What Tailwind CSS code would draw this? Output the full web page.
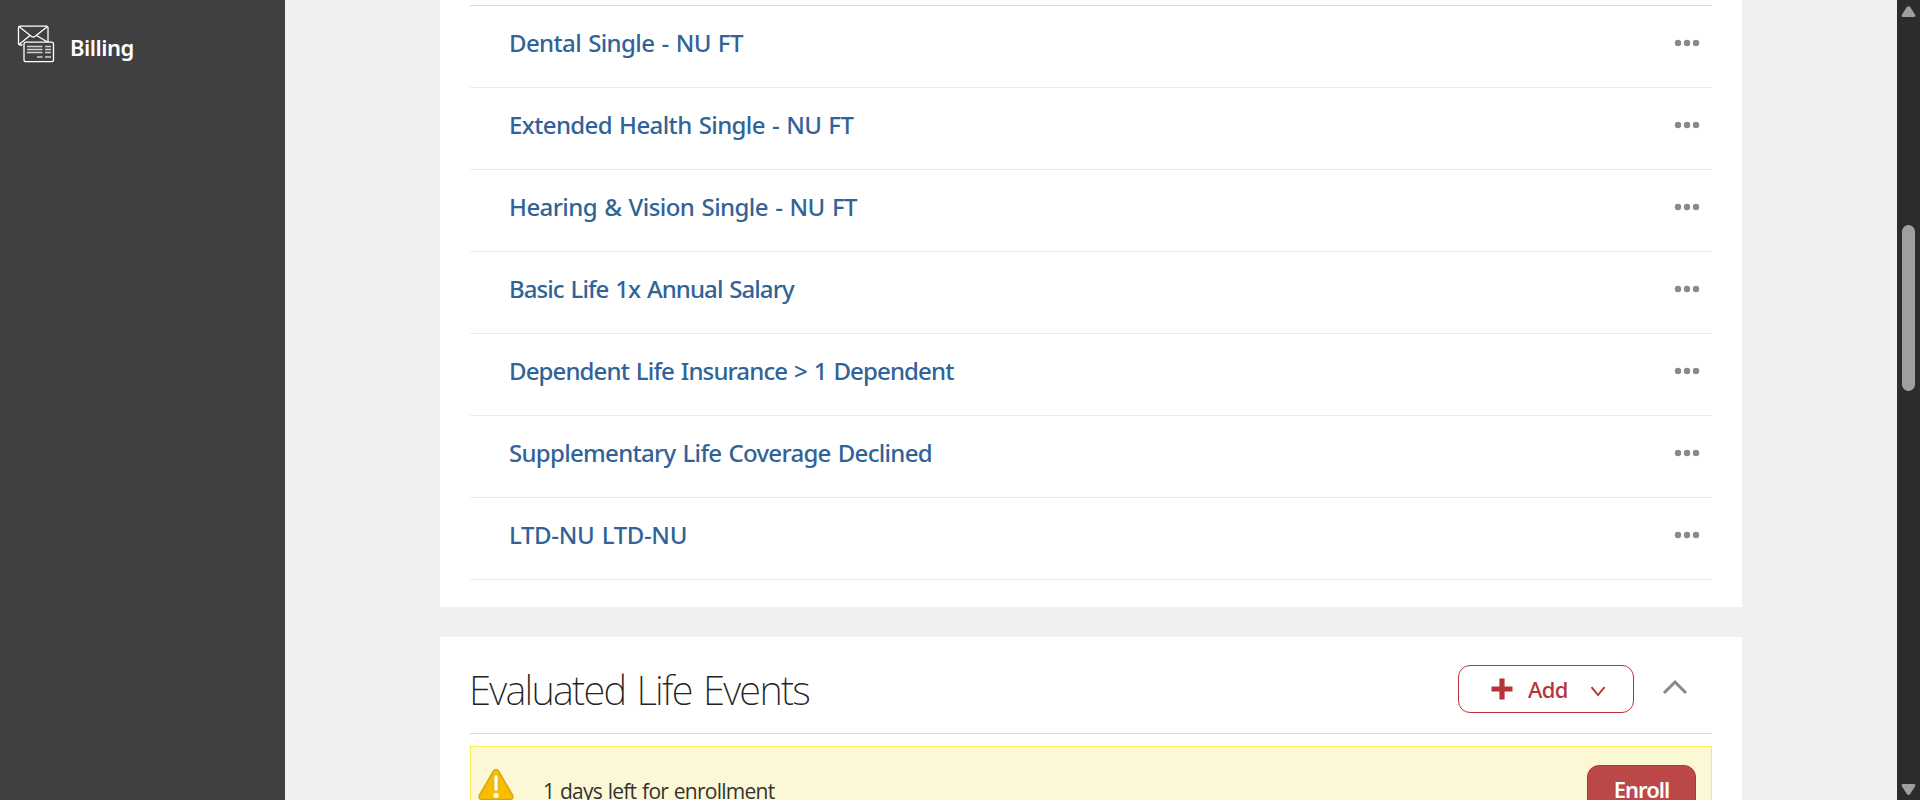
<!DOCTYPE html>
<html lang="en">
<head>
<meta charset="utf-8">
<title>Benefits</title>
<script src="https://cdn.jsdelivr.net/npm/@tailwindcss/browser@4"></script>
</head>
<body class="h-[800px] w-[1920px] overflow-hidden bg-[#f0f0f0] font-['Noto_Sans',sans-serif]">
<svg class="hidden">
  <symbol id="dots" viewBox="0 0 26 8"><g fill="#868b8e"><circle cx="4" cy="4" r="3.2"/><circle cx="13" cy="4" r="3.2"/><circle cx="22" cy="4" r="3.2"/></g></symbol>
</svg>
<div class="flex h-[800px]">
  <aside class="w-[285px] shrink-0 bg-[#404040]">
    <a class="flex h-[90px] border-b border-[#453c41] pl-[17px] text-white">
      <svg class="mt-[25px] h-[38px] w-[38px] shrink-0" viewBox="0 0 38 38" fill="none" stroke="#fff">
        <path d="M5.5 20H3a1.5 1.5 0 0 1-1.500-1.500v-16A1.500 1.500 0 0 1 3 1.200h26.500a1.500 1.500 0 0 1 1.500 1.500V17" stroke-width="1.3"/>
        <path d="M2 1.500 14.500 11.500q1.700 1 3.400 0L30.500 1.500M2 19.500 13 10.500M30.500 17 19.500 10.500" stroke-width="1.300"/>
        <rect x="7" y="17.200" width="29.500" height="19.500" rx="2" fill="#404040" stroke-width="1.300"/>
        <g stroke="#d0d0d0" stroke-width="1.600"><path d="M10 21.500h15.500M28 21.500h6M10 24.500h15.500M28 24.500h6M10 27.500h15.500M28 27.500h6M20 32h5.500M28 32h6"/></g>
      </svg>
      <span class="mt-[31px] ml-[15px] text-[22px] leading-8 font-semibold tracking-[-0.5px]">Billing</span>
    </a>
  </aside>

  <main class="flex w-[1612px] shrink-0 flex-col gap-[30px] pl-[155px]">
    <section class="h-[607px] w-[1302px] bg-white px-[30px] pt-[5px]">
      <ul class="border-t border-[#d3dde5] text-[24px] font-medium text-[#316399] [word-spacing:1.5px]">
        <li class="flex h-[82px] items-start justify-between border-b border-[#ececec] pr-3 pl-[39px]"><a class="mt-[19px] leading-9 tracking-[-0.62px]">Dental Single - NU FT</a><svg class="mt-[33px] h-2 w-[26px]"><use href="#dots"/></svg></li>
        <li class="flex h-[82px] items-start justify-between border-b border-[#ececec] pr-3 pl-[39px]"><a class="mt-[19px] leading-9 tracking-[-0.62px]">Extended Health Single - NU FT</a><svg class="mt-[33px] h-2 w-[26px]"><use href="#dots"/></svg></li>
        <li class="flex h-[82px] items-start justify-between border-b border-[#ececec] pr-3 pl-[39px]"><a class="mt-[19px] leading-9 tracking-[-0.56px]">Hearing &amp; Vision Single - NU FT</a><svg class="mt-[33px] h-2 w-[26px]"><use href="#dots"/></svg></li>
        <li class="flex h-[82px] items-start justify-between border-b border-[#ececec] pr-3 pl-[39px]"><a class="mt-[19px] leading-9 tracking-[-0.93px]">Basic Life 1x Annual Salary</a><svg class="mt-[33px] h-2 w-[26px]"><use href="#dots"/></svg></li>
        <li class="flex h-[82px] items-start justify-between border-b border-[#ececec] pr-3 pl-[39px]"><a class="mt-[19px] leading-9 tracking-[-0.88px]">Dependent Life Insurance &gt; 1 Dependent</a><svg class="mt-[33px] h-2 w-[26px]"><use href="#dots"/></svg></li>
        <li class="flex h-[82px] items-start justify-between border-b border-[#ececec] pr-3 pl-[39px]"><a class="mt-[19px] leading-9 tracking-[-0.7px]">Supplementary Life Coverage Declined</a><svg class="mt-[33px] h-2 w-[26px]"><use href="#dots"/></svg></li>
        <li class="flex h-[82px] items-start justify-between border-b border-[#ececec] pr-3 pl-[39px]"><a class="mt-[19px] leading-9 tracking-[-0.35px]">LTD-NU LTD-NU</a><svg class="mt-[33px] h-2 w-[26px]"><use href="#dots"/></svg></li>
      </ul>
    </section>

    <section class="h-[163px] w-[1302px] overflow-hidden bg-white px-[30px]">
      <header class="flex h-[97px] items-start border-b border-[#d3dde5] pt-7">
        <h2 class="-ml-px flex-1 text-[40px] leading-[50px] font-extralight tracking-[-1.75px] [word-spacing:2.5px] text-[#222]">Evaluated Life Events</h2>
        <button class="flex h-12 w-[176px] items-center rounded-xl border border-[#b83338] pl-8 text-[#b83338]">
          <svg class="h-[22px] w-[22px]" viewBox="0 0 22 22" fill="none" stroke="currentColor" stroke-width="5.200"><path d="M11 .5v21M.500 11h21"/></svg>
          <span class="ml-[15px] text-[22px] leading-[30px] font-medium tracking-[-0.6px]">Add</span>
          <svg class="mt-1 ml-[22px] h-[11px] w-[16px]" viewBox="0 0 16 11" fill="none" stroke="currentColor" stroke-width="1.900"><path d="M1.500 1.200 8 9l6.500-7.800"/></svg>
        </button>
        <svg class="mt-[14px] mr-6 ml-[28px] h-4 w-[26px]" viewBox="0 0 26 16" fill="none" stroke="#84898c" stroke-width="3"><path d="M2 14 13 3l11 11"/></svg>
      </header>
      <div class="mt-3 flex h-[90px] items-start border border-[#fcee5b] bg-[#fcf8d5] pl-[7px] pr-[15px]">
        <svg class="mt-[21px] h-[33px] w-9" viewBox="0 0 36 33">
          <path d="M15.500 3Q18 0 20.500 3L34.500 27q1.500 4-2.500 4.500H4Q0 31 1.500 27Z" fill="#f8bd00" stroke="#d9a511" stroke-width="1.500"/>
          <rect x="16" y="7" width="4" height="16" rx="1.500" fill="#fff" stroke="#d9a511" stroke-width=".6"/>
          <circle cx="18" cy="27.500" r="2.600" fill="#fff"/>
        </svg>
        <p class="mt-[29px] ml-[29px] flex-1 font-['Open_Sans'] text-[21px] leading-[30px] tracking-[-0.75px] [word-spacing:1px] text-[#333]">1 days left for enrollment</p>
        <button class="mt-[18px] h-12 w-[109px] rounded-xl border border-[#b23338] bg-[#bd4848] text-[22px] leading-[46px] font-semibold tracking-[-1px] text-white">Enroll</button>
      </div>
    </section>
  </main>

  <div class="flex w-[23px] shrink-0 flex-col items-start justify-between bg-[#2c2c2c] pt-[5px] pb-1 pl-1">
    <svg class="h-[13px] w-[15px]" viewBox="0 0 15 13"><path d="M6 1.800Q7.500.500 9 1.800L14.300 10q.700 2-1.300 2H2Q0 12 .700 10Z" fill="#9f9f9f"/></svg>
    <div class="mt-[3px] mb-[189px] ml-px h-[166px] w-[13px] rounded-full bg-[#9f9f9f]"></div>
    <svg class="h-[13px] w-[15px]" viewBox="0 0 15 13"><path d="M6 11.200q1.500 1.300 3 0L14.300 3q.700-2-1.300-2H2Q0 1 .700 3Z" fill="#9f9f9f"/></svg>
  </div>
</div>
</body>
</html>
